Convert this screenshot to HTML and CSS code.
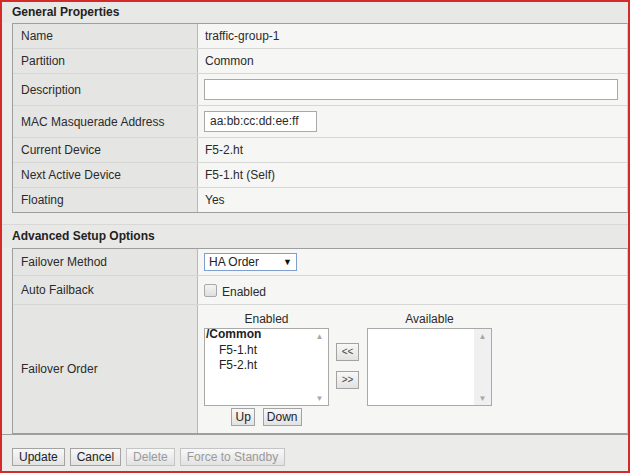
FILE: index.html
```html
<!DOCTYPE html>
<html>
<head>
<meta charset="utf-8">
<link rel="stylesheet" href="styles.css">
</head>
<body>
<div class="frame">
  <div class="section-title first">General Properties</div>
  <div class="grid">
    <div class="row h25"><div class="lbl">Name</div><div class="val">traffic-group-1</div></div>
    <div class="row h25"><div class="lbl">Partition</div><div class="val">Common</div></div>
    <div class="row h32"><div class="lbl">Description</div><div class="val input-cell"><div class="textbox wide"></div></div></div>
    <div class="row h32"><div class="lbl">MAC Masquerade Address</div><div class="val input-cell"><div class="textbox mac">aa:bb:cc:dd:ee:ff</div></div></div>
    <div class="row h25"><div class="lbl">Current Device</div><div class="val">F5-2.ht</div></div>
    <div class="row h25"><div class="lbl">Next Active Device</div><div class="val">F5-1.ht (Self)</div></div>
    <div class="row h24 last"><div class="lbl">Floating</div><div class="val">Yes</div></div>
  </div>

  <div class="section-title second">Advanced Setup Options</div>
  <div class="grid">
    <div class="row h27"><div class="lbl">Failover Method</div><div class="val input-cell"><div class="select"><span>HA Order</span><span class="arrow">▼</span></div></div></div>
    <div class="row h29"><div class="lbl">Auto Failback</div><div class="val input-cell"><span class="checkbox"></span><span class="cb-label">Enabled</span></div></div>
    <div class="row h128 last"><div class="lbl">Failover Order</div>
      <div class="val order-cell">
        <div class="order-col">
          <div class="list-title">Enabled</div>
          <div class="listbox">
            <div class="list-items">
              <div class="item bold">/Common</div>
              <div class="item indent">F5-1.ht</div>
              <div class="item indent">F5-2.ht</div>
            </div>
            <div class="scroll"><span class="up">▲</span><span class="down">▼</span></div>
          </div>
          <div class="updown"><span class="btn small">Up</span><span class="btn small">Down</span></div>
        </div>
        <div class="move-col">
          <span class="btn move">&lt;&lt;</span>
          <span class="btn move">&gt;&gt;</span>
        </div>
        <div class="order-col">
          <div class="list-title">Available</div>
          <div class="listbox">
            <div class="list-items"></div>
            <div class="scroll grey"><span class="up">▲</span><span class="down">▼</span></div>
          </div>
        </div>
      </div>
    </div>
  </div>

  <div class="actions">
    <span class="btn">Update</span>
    <span class="btn">Cancel</span>
    <span class="btn disabled">Delete</span>
    <span class="btn disabled">Force to Standby</span>
  </div>
</div>
</body>
</html>
```
FILE: styles.css
```css
html, body {
  margin: 0;
  padding: 0;
}
body {
  font-family: "Liberation Sans", Arial, sans-serif;
  font-size: 12px;
  color: #2b2b2b;
}
.frame {
  width: 630px;
  height: 473px;
  box-sizing: border-box;
  border: 2px solid #d52a2a;
  background: #ebebe9;
  overflow: hidden;
}
.section-title {
  font-weight: bold;
  color: #222;
  padding-left: 10px;
  background: #e8e8e6;
}
.section-title.first {
  height: 21px;
  line-height: 21px;
}
.section-title.second {
  margin-top: 11px;
  border-top: 1px solid #d8d8d6;
  height: 23px;
  line-height: 23px;
}
.grid {
  margin-left: 10px;
  border: 1px solid #9e9e9e;
  border-right: 1px solid #d0d0ce;
  background: #f6f6f4;
}
.row {
  display: flex;
  border-bottom: 1px solid #d6d6d4;
}
.row.last {
  border-bottom: none;
}
.h24 { height: 24px; }
.h25 { height: 24px; }
.h27 { height: 26px; }
.h29 { height: 28px; }
.h32 { height: 31px; }
.h128 { height: 128px; }
.lbl {
  width: 176px;
  flex: none;
  padding-left: 8px;
  background: #e5e5e3;
  border-right: 1px solid #b8b8b6;
  display: flex;
  align-items: center;
}
.val {
  flex: 1;
  padding-left: 7px;
  display: flex;
  align-items: center;
}
.input-cell {
  padding-left: 6px;
}
.textbox {
  height: 19px;
  line-height: 19px;
  border: 1px solid #a9a9a9;
  background: #fff;
  padding-left: 5px;
  box-sizing: content-box;
}
.textbox.wide { width: 407px; }
.textbox.mac { width: 106px; }
.select {
  width: 83px;
  height: 16px;
  line-height: 16px;
  border: 1px solid #7f9fcf;
  background: #fff;
  padding: 0 4px 0 4px;
  display: flex;
  justify-content: space-between;
  color: #222;
}
.select .arrow {
  font-size: 9px;
  color: #111;
}
.checkbox {
  width: 11px;
  height: 11px;
  border: 1px solid #a8a8a8;
  border-radius: 2px;
  background: linear-gradient(#f4f4f4, #dedede);
  margin-top: 0;
}
.cb-label {
  margin-left: 5px;
  margin-top: 3px;
}
.order-cell {
  align-items: flex-start;
  padding-left: 6px;
  padding-top: 6px;
}
.order-col {
  display: flex;
  flex-direction: column;
  align-items: center;
}
.list-title {
  height: 16px;
  line-height: 16px;
  margin-bottom: 1px;
}
.listbox {
  width: 123px;
  height: 76px;
  border: 1px solid #a9a9a9;
  background: #fff;
  display: flex;
}
.list-items {
  flex: 1;
  padding-left: 1px;
  color: #222;
}
.item {
  line-height: 15.5px;
}
.item.bold { font-weight: bold; margin-top: -2px; }
.item.indent { padding-left: 13px; }
.scroll {
  width: 17px;
  display: flex;
  flex-direction: column;
  justify-content: space-between;
  align-items: center;
  font-size: 8px;
  color: #a8a8a8;
  padding: 3px 0 2px;
}
.scroll.grey {
  background: #f0f0f0;
}
.updown {
  display: flex;
  gap: 8px;
  margin-top: 2px;
}
.move-col {
  display: flex;
  flex-direction: column;
  gap: 10px;
  margin: 32px 8px 0 7px;
}
.btn {
  display: inline-block;
  height: 16px;
  line-height: 16px;
  padding: 0 4px;
  border: 1px solid #a3a3a3;
  background: linear-gradient(#f8f8f8, #e2e2e2);
  color: #222;
}
.btn.small {
  padding: 0 3px;
}
.btn.move {
  width: 13px;
  font-size: 10px;
  text-align: center;
  color: #444;
}
.btn.disabled {
  color: #9a9a9a;
  border-color: #c4c4c4;
}
.actions {
  border-top: 1px solid #9e9e9e;
  margin-top: 0;
  padding: 13px 0 0 10px;
  display: flex;
  gap: 5px;
}
.actions .btn {
  padding: 0 6px;
}
```
